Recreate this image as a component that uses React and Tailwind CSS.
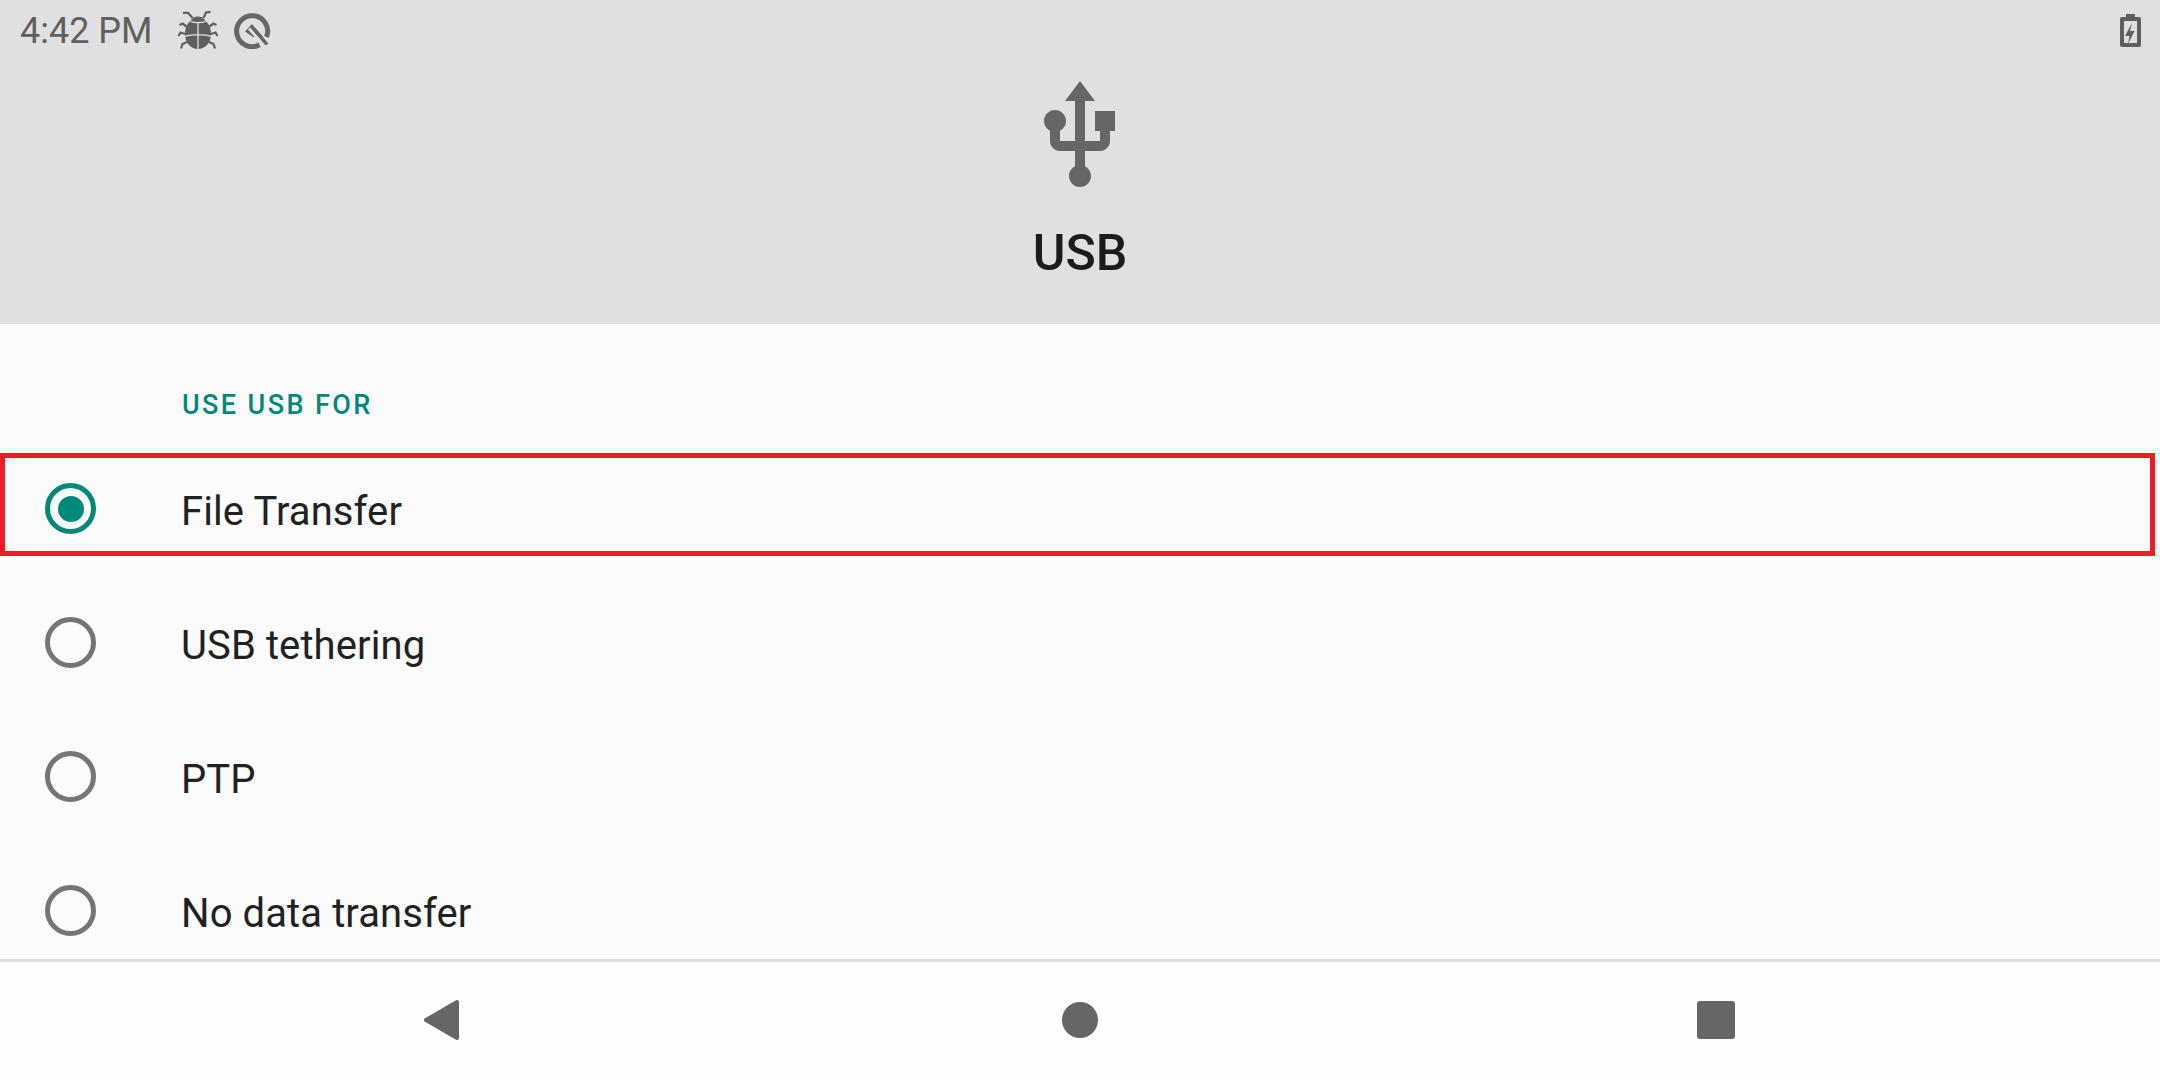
import React from "react";

const Radio = ({ on }) => (
  <div className={`mt-[8px] flex h-[51px] w-[51px] shrink-0 items-center justify-center rounded-full border-[5px] ${on ? "border-[#00897b]" : "border-[#757575]"}`}>
    {on && <div className="h-[26px] w-[26px] rounded-full bg-[#00897b]" />}
  </div>
);

const Row = ({ label, on, boxed, className = "" }) => (
  <div className={`flex h-[103px] items-center ${boxed ? "w-[2155px] border-[5px] border-[#ef1b27] pl-[40px]" : "pl-[45px]"} ${className}`}>
    <Radio on={on} />
    <span className="ml-[85px] pt-[14px] text-[40px] leading-[48px] tracking-[0.1px] text-[#212121]">{label}</span>
  </div>
);

export default function App() {
  return (
    <div className="flex h-[1080px] w-[2160px] flex-col overflow-hidden bg-[#fbfbfb] font-['Roboto',sans-serif]">
      <header className="flex h-[324px] shrink-0 flex-col bg-[#e0e0e0]">
        <div className="flex h-[60px] items-center pl-[20px] pr-[19px]">
          <span className="pt-[1px] text-[36px] leading-[60px] text-[#5f5f5f]">4:42 PM</span>
          <svg className="ml-[24px]" width="42" height="42" viewBox="0 0 42 42" fill="#5f5f5f">
            <path d="M21 7.500c-3.500 0-6 1.500-7.200 4.200C10.500 14 8 18.500 8 25c0 8.500 5.500 15 13 15s13-6.500 13-15c0-6.500-2.500-11-5.800-13.300C27 9 24.500 7.500 21 7.500z" />
            <path d="M15.500 9L11 3.800H6M26.500 9L29 3.500 33.500 2.800M9.500 17.500L5.500 14.500 2.500 16M32.500 17.500L36.500 14.500 39.500 16M8 25L3.500 23.500 1.500 27M34 25L38.500 23.500 40.500 27M10 33L5.500 35 4 39.500M32 33L36.500 35 38 39.500" fill="none" stroke="#5f5f5f" strokeWidth="2.200" />
            <path d="M21 13v27M8 27.500C14 25 28 25 34 27.500M13.500 12.500C17 14 25 14 28.500 12.500" fill="none" stroke="#e0e0e0" strokeWidth="1.300" />
          </svg>
          <svg className="ml-[14px]" width="38" height="38" viewBox="0 0 38 38" fill="none" stroke="#666666">
            <path d="M26.500 33.800A15.500 15.500 0 1 1 33.500 26" strokeWidth="5" />
            <path d="M12 20.500L19 13 30 26H20z" fill="#666666" stroke="none" />
            <path d="M16 17.500L30 33" strokeWidth="3" stroke="#e0e0e0" />
            <path d="M21.500 18.500L34 33.500" strokeWidth="3.500" />
          </svg>
          <svg className="ml-auto" width="21" height="33" viewBox="0 0 21 33">
            <path d="M6 0h9v3h4a2 2 0 0 1 2 2v26a2 2 0 0 1-2 2H2a2 2 0 0 1-2-2V5a2 2 0 0 1 2-2h4z" fill="#5f5f5f" />
            <rect x="4" y="7" width="13" height="22" fill="#e0e0e0" />
            <path d="M12 9L5 22h4.500L8 30l6.500-13H10z" fill="#5f5f5f" />
          </svg>
        </div>
        <svg className="mx-auto mt-[16px]" width="120" height="120" viewBox="0 0 24 24" fill="#666666">
          <path d="M15 7v4h1v2h-3V5h2l-3-4-3 4h2v8H8v-2.07c.7-.37 1.2-1.08 1.2-1.93 0-1.21-.99-2.2-2.2-2.2-1.21 0-2.2.99-2.2 2.2 0 .85.5 1.56 1.2 1.93V13c0 1.11.89 2 2 2h3v3.05c-.71.37-1.2 1.1-1.2 1.95 0 1.22.99 2.2 2.2 2.2 1.21 0 2.2-.98 2.2-2.2 0-.85-.49-1.58-1.2-1.95V15h3c1.11 0 2-.89 2-2v-2h1V7h-4z" />
        </svg>
        <h1 className="mt-[27px] text-center text-[50px] font-medium leading-[60px] text-[#1c1c1c]">USB</h1>
      </header>

      <main className="flex min-h-0 flex-1 flex-col">
        <div className="pl-[182px] pt-[65px] text-[27px] font-medium leading-[32px] tracking-[2.4px] text-[#00897b]">USE USB FOR</div>
        <Row label="File Transfer" on boxed className="mt-[32px]" />
        <Row label="USB tethering" className="mt-[31px]" />
        <Row label="PTP" className="mt-[31px]" />
        <Row label="No data transfer" className="mt-[31px]" />
      </main>

      <footer className="flex h-[121px] shrink-0 items-center border-t-[3px] border-[#dcdcdc] bg-[#fefefe] pb-[2px] pl-[420px]">
        <svg width="44" height="44" viewBox="0 0 44 44" fill="#666666">
          <path d="M37 4V40L6 22z" stroke="#666666" strokeWidth="4" strokeLinejoin="round" />
        </svg>
        <div className="ml-[598px] h-[36px] w-[36px] rounded-full bg-[#666666]" />
        <div className="ml-[599px] h-[38px] w-[38px] rounded-[3px] bg-[#666666]" />
      </footer>
    </div>
  );
}
